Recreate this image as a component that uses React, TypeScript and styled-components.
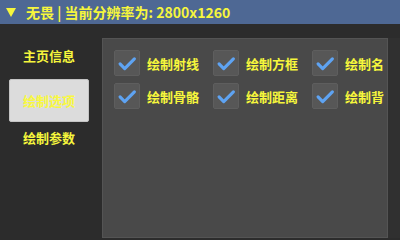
import React from "react";
import styled, { createGlobalStyle } from "styled-components";

const options = [
  "绘制射线",
  "绘制方框",
  "绘制名字",
  "绘制骨骼",
  "绘制距离",
  "绘制背景",
];

const GlobalStyle = createGlobalStyle`
  html, body {
    margin: 0;
    padding: 0;
    background: #2c2c2c;
    font-family: "Noto Sans CJK SC", "Noto Sans", sans-serif;
  }
`;

const Check: React.FC = () => (
  <Box>
    <svg width="26" height="26" viewBox="0 0 26 26">
      <polyline
        points="5.5,14 10.5,19 21,8.5"
        fill="none"
        stroke="#5ea3f2"
        strokeWidth="3.4"
        strokeLinecap="round"
        strokeLinejoin="round"
      />
    </svg>
  </Box>
);

const App: React.FC = () => {
  return (
    <Window>
      <GlobalStyle />
      <TitleBar>
        <Arrow />
        <Title>无畏 | 当前分辨率为: 2800x1260</Title>
      </TitleBar>
      <Body>
        <Sidebar>
          <NavItem>主页信息</NavItem>
          <NavButton>绘制选项</NavButton>
          <NavItem $top={4}>绘制参数</NavItem>
        </Sidebar>
        <Panel>
          <Clip>
            <Grid>
              {options.map((o) => (
                <Option key={o}>
                  <Check />
                  <Label>{o}</Label>
                </Option>
              ))}
            </Grid>
          </Clip>
        </Panel>
        <ScrollTrack />
      </Body>
    </Window>
  );
};

export default App;

// Styled components
const Window = styled.div`
  width: 400px;
  height: 240px;
  display: flex;
  flex-direction: column;
  background: #2c2c2c;
  overflow: hidden;
`;

const TitleBar = styled.div`
  height: 24px;
  background: #4e6894;
  display: flex;
  align-items: center;
  padding-left: 6px;
  gap: 10px;
`;

const Arrow = styled.div`
  width: 0;
  height: 0;
  border-left: 5.5px solid transparent;
  border-right: 5.5px solid transparent;
  border-top: 9px solid #f6f63c;
`;

const Title = styled.div`
  color: #f6f63c;
  font-size: 14px;
  font-weight: bold;
  white-space: nowrap;
`;

const Body = styled.div`
  flex: 1;
  display: flex;
  padding-top: 14px;
  padding-bottom: 2px;
`;

const Sidebar = styled.div`
  width: 102px;
  flex-shrink: 0;
  display: flex;
  flex-direction: column;
  padding: 6px 0 0 9px;
  box-sizing: border-box;
`;

const NavItem = styled.div<{ $top?: number }>`
  width: 80px;
  height: 23px;
  margin-top: ${(p) => p.$top ?? 0}px;
  display: flex;
  align-items: center;
  justify-content: center;
  color: #f6f63c;
  font-size: 13px;
  font-weight: bold;
`;

const NavButton = styled.div`
  width: 80px;
  height: 43px;
  margin-top: 12px;
  box-sizing: border-box;
  border: 1px solid #c4c4c4;
  border-radius: 2px;
  background: #dcdcdc;
  display: flex;
  align-items: center;
  justify-content: center;
  color: #f8f840;
  font-size: 13px;
  font-weight: bold;
`;

const Panel = styled.div`
  width: 286px;
  flex-shrink: 0;
  box-sizing: border-box;
  background: #494949;
  border: 1px solid #545454;
  padding: 11px 0 0 11px;
  overflow: hidden;
`;

const Clip = styled.div`
  width: 270px;
  overflow: hidden;
`;

const Grid = styled.div`
  display: grid;
  grid-template-columns: repeat(3, 99px);
  row-gap: 7px;
`;

const Option = styled.div`
  display: flex;
  align-items: center;
  gap: 7px;
  white-space: nowrap;
`;

const Box = styled.div`
  width: 26px;
  height: 26px;
  flex-shrink: 0;
  box-sizing: border-box;
  background: #575757;
  border: 1px solid #5e5e5e;
  border-radius: 2px;
  display: flex;
  align-items: center;
  justify-content: center;

  svg {
    display: block;
  }
`;

const Label = styled.span`
  color: #f6f63c;
  font-size: 13px;
  font-weight: bold;
`;

const ScrollTrack = styled.div`
  flex: 1;
  background: #303030;
`;
